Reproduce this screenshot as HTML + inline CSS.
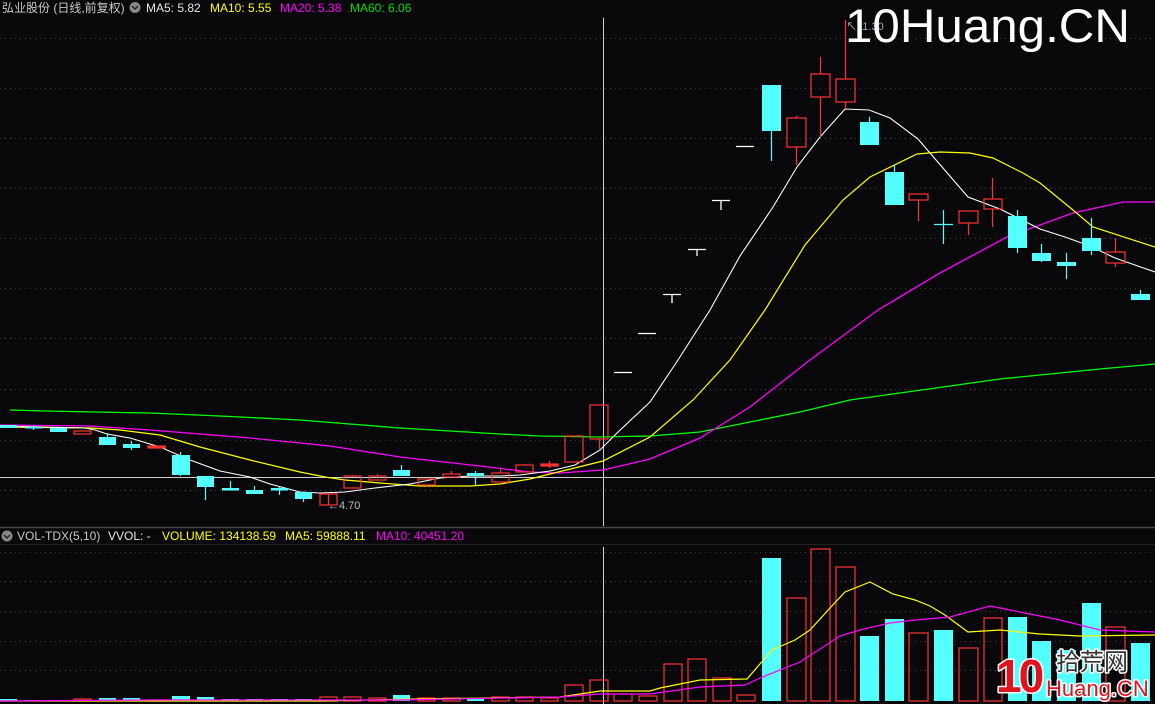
<!DOCTYPE html>
<html><head><meta charset="utf-8"><style>
html,body{margin:0;padding:0;background:#08080b;width:1155px;height:704px;overflow:hidden}
svg{display:block}
text{font-family:"Liberation Sans","Noto Sans CJK SC",sans-serif}
</style></head><body>
<svg width="1155" height="704" viewBox="0 0 1155 704" xmlns="http://www.w3.org/2000/svg">
<rect width="1155" height="704" fill="#08080b"/>
<g stroke="#3a3a3a" stroke-dasharray="1,4" stroke-width="1">
<line x1="0" y1="38.5" x2="1155" y2="38.5"/><line x1="0" y1="88.5" x2="1155" y2="88.5"/><line x1="0" y1="138.5" x2="1155" y2="138.5"/><line x1="0" y1="188.5" x2="1155" y2="188.5"/><line x1="0" y1="238.5" x2="1155" y2="238.5"/><line x1="0" y1="288.5" x2="1155" y2="288.5"/><line x1="0" y1="338.5" x2="1155" y2="338.5"/><line x1="0" y1="389.5" x2="1155" y2="389.5"/><line x1="0" y1="440.5" x2="1155" y2="440.5"/><line x1="0" y1="490.5" x2="1155" y2="490.5"/>
<line x1="0" y1="552.5" x2="1155" y2="552.5"/><line x1="0" y1="581.5" x2="1155" y2="581.5"/><line x1="0" y1="611.5" x2="1155" y2="611.5"/><line x1="0" y1="641.5" x2="1155" y2="641.5"/><line x1="0" y1="670.5" x2="1155" y2="670.5"/>
</g>
<line x1="0" y1="527.5" x2="1155" y2="527.5" stroke="#444" stroke-width="1.5"/>
<line x1="0" y1="544.5" x2="1155" y2="544.5" stroke="#222"/>
<line x1="603.5" y1="18" x2="603.5" y2="526" stroke="#cfcfcf"/>
<line x1="603.5" y1="547" x2="603.5" y2="704" stroke="#cfcfcf"/>
<line x1="0" y1="477.5" x2="1155" y2="477.5" stroke="#cfcfcf"/>

<polyline fill="none" stroke="#00ff00" stroke-width="1.3" points="10,410 45,411 95,412 150,413 220,416 300,420 350,424 400,428 450,431 500,434 540,436 600,437 650,436 700,432 750,422 800,412 850,400 900,393 950,386 1000,379 1050,374 1100,369 1155,364"/>
<polyline fill="none" stroke="#ff00ff" stroke-width="1.3" points="0,425 90,426 150,430 250,438 330,446 400,457 480,466 530,472 560,473 603,470 650,459 700,438 750,407 810,360 878,310 940,273 1007,237 1073,213 1123,202 1155,202"/>
<polyline fill="none" stroke="#ffff00" stroke-width="1.2" points="0,427 90,428 120,430 160,435 200,447 250,460 300,472 325,477 345,480 380,483 420,486 470,486 500,484 530,479 550,474 603,461 650,437 693,400 730,360 765,310 805,245 843,200 870,177 917,154 940,152 970,153 993,158 1023,173 1040,183 1073,210 1093,227 1155,247"/>
<polyline fill="none" stroke="#ffffff" stroke-width="1.1" points="0,426 85,428 95,430 107,434 130,438 160,447 190,460 220,471 250,477 270,484 300,492 320,493 345,492 375,488 410,484 440,478 470,476 500,476 520,475 550,471 575,465 600,450 617,433 650,402 678,360 710,310 740,256 773,207 797,167 820,137 845,109 869,110 890,118 918,139 930,153 968,197 1000,209 1040,229 1065,237 1090,246 1115,258 1155,272"/>

<g stroke="#ff3232" fill="none" stroke-width="1.2">
<rect x="74" y="431" width="17" height="3"/>
<rect x="148" y="446" width="17" height="2" fill="#ff3232"/>
<line x1="328.5" y1="494" x2="328.5" y2="505"/><rect x="320" y="494" width="17" height="11"/>
<line x1="352.5" y1="475" x2="352.5" y2="476"/><rect x="344" y="476" width="17" height="12"/>
<line x1="377.5" y1="474" x2="377.5" y2="476"/><rect x="369" y="476" width="17" height="4"/>
<line x1="426.5" y1="485" x2="426.5" y2="487"/><rect x="418" y="479" width="17" height="6"/>
<line x1="451.5" y1="471" x2="451.5" y2="474"/><rect x="443" y="474" width="17" height="3"/>
<line x1="500.5" y1="468" x2="500.5" y2="473"/><rect x="492" y="473" width="17" height="9"/>
<line x1="524.5" y1="464" x2="524.5" y2="465"/><rect x="516" y="465" width="17" height="7"/>
<line x1="549.5" y1="461" x2="549.5" y2="468"/><rect x="541" y="464" width="17" height="2" fill="#ff3232"/>
<rect x="565" y="436" width="18" height="26"/>
<line x1="599.5" y1="439" x2="599.5" y2="449"/><rect x="590" y="405" width="18" height="34"/>
<line x1="796.5" y1="116" x2="796.5" y2="118"/><line x1="796.5" y1="147" x2="796.5" y2="165"/><rect x="787" y="118" width="19" height="29"/>
<line x1="820.5" y1="57" x2="820.5" y2="74"/><line x1="820.5" y1="97" x2="820.5" y2="137"/><rect x="811" y="74" width="19" height="23"/>
<line x1="845.5" y1="20" x2="845.5" y2="79"/><line x1="845.5" y1="102" x2="845.5" y2="109"/><rect x="836" y="79" width="19" height="23"/>
<line x1="918.5" y1="200" x2="918.5" y2="221"/><rect x="909" y="194" width="19" height="6"/>
<line x1="968.5" y1="223" x2="968.5" y2="235"/><rect x="959" y="211" width="19" height="12"/>
<line x1="992.5" y1="178" x2="992.5" y2="199"/><line x1="992.5" y1="209" x2="992.5" y2="227"/><rect x="984" y="199" width="18" height="10"/>
<line x1="1115.5" y1="238" x2="1115.5" y2="252"/><line x1="1115.5" y1="263" x2="1115.5" y2="267"/><rect x="1106" y="252" width="19" height="11"/>
</g>
<g stroke="#ffffff" stroke-width="1.3">
<line x1="614" y1="372.5" x2="632" y2="372.5"/>
<line x1="638" y1="333.5" x2="656" y2="333.5"/>
<line x1="663" y1="294.5" x2="681" y2="294.5"/><line x1="672" y1="294" x2="672" y2="303"/>
<line x1="688" y1="249.5" x2="706" y2="249.5"/><line x1="697" y1="249" x2="697" y2="256"/>
<line x1="712" y1="200.5" x2="730" y2="200.5"/><line x1="721" y1="200" x2="721" y2="210"/>
<line x1="736" y1="146.5" x2="754" y2="146.5"/>
</g>
<g fill="#54ffff" stroke="#54ffff" stroke-width="1.2">
<rect x="0" y="425" width="17" height="3" stroke="none"/>
<line x1="33.5" y1="426" x2="33.5" y2="430"/><rect x="25" y="427" width="17" height="1.5" stroke="none"/>
<rect x="50" y="428" width="17" height="4" stroke="none"/>
<line x1="107.5" y1="433" x2="107.5" y2="437"/><rect x="99" y="437" width="17" height="8" stroke="none"/>
<line x1="131.5" y1="441" x2="131.5" y2="450"/><rect x="123" y="444" width="17" height="4" stroke="none"/>
<line x1="180.5" y1="452" x2="180.5" y2="476"/><rect x="172" y="455" width="18" height="20" stroke="none"/>
<line x1="205.5" y1="476" x2="205.5" y2="500"/><rect x="197" y="476" width="17" height="11" stroke="none"/>
<line x1="230.5" y1="481" x2="230.5" y2="488"/><rect x="222" y="488" width="17" height="2.5" stroke="none"/>
<line x1="254.5" y1="486" x2="254.5" y2="490"/><rect x="246" y="490" width="17" height="4" stroke="none"/>
<line x1="279.5" y1="486" x2="279.5" y2="495"/><rect x="271" y="488" width="17" height="2.5" stroke="none"/>
<line x1="303.5" y1="492" x2="303.5" y2="502"/><rect x="295" y="492" width="17" height="7" stroke="none"/>
<line x1="401.5" y1="465" x2="401.5" y2="470"/><rect x="393" y="470" width="17" height="6" stroke="none"/>
<line x1="475.5" y1="471" x2="475.5" y2="485"/><rect x="467" y="473" width="17" height="3" stroke="none"/>
<line x1="771.5" y1="131" x2="771.5" y2="161"/><rect x="762" y="85" width="19" height="46" stroke="none"/>
<line x1="869.5" y1="117" x2="869.5" y2="122"/><rect x="860" y="122" width="19" height="23" stroke="none"/>
<line x1="894.5" y1="165" x2="894.5" y2="172"/><rect x="885" y="172" width="19" height="33" stroke="none"/>
<line x1="943.5" y1="210" x2="943.5" y2="244"/><line x1="934" y1="224.5" x2="953" y2="224.5"/>
<line x1="1017.5" y1="210" x2="1017.5" y2="253"/><rect x="1008" y="216" width="19" height="32" stroke="none"/>
<line x1="1041.5" y1="244" x2="1041.5" y2="262"/><rect x="1032" y="253" width="19" height="8" stroke="none"/>
<line x1="1066.5" y1="253" x2="1066.5" y2="279"/><rect x="1057" y="262" width="19" height="4" stroke="none"/>
<line x1="1091.5" y1="218" x2="1091.5" y2="255"/><rect x="1082" y="238" width="19" height="13" stroke="none"/>
<line x1="1140.5" y1="290" x2="1140.5" y2="294"/><rect x="1131" y="294" width="19" height="6" stroke="none"/>
</g>
<text x="846" y="30" font-size="11" fill="#9ab">↖11.30</text>
<text x="328" y="509" font-size="11" fill="#bbb">←4.70</text>

<g fill="#54ffff">
<rect x="0" y="699" width="17" height="2"/><rect x="25" y="700" width="17" height="1"/><rect x="50" y="700" width="17" height="1"/><rect x="99" y="698" width="17" height="3"/><rect x="123" y="698" width="17" height="3"/><rect x="172" y="696" width="18" height="5"/><rect x="197" y="697" width="17" height="4"/><rect x="222" y="699" width="17" height="2"/><rect x="246" y="699" width="17" height="2"/><rect x="271" y="699" width="17" height="2"/><rect x="295" y="699" width="17" height="2"/><rect x="393" y="695" width="17" height="6"/><rect x="467" y="698" width="17" height="3"/>
<rect x="762" y="558" width="19" height="143"/><rect x="860" y="636" width="19" height="65"/><rect x="885" y="619" width="19" height="82"/><rect x="934" y="630" width="19" height="71"/><rect x="1008" y="617" width="19" height="84"/><rect x="1032" y="641" width="19" height="60"/><rect x="1057" y="650" width="19" height="51"/><rect x="1082" y="603" width="19" height="98"/><rect x="1131" y="643" width="19" height="58"/>
</g>
<g fill="none" stroke="#ff3232" stroke-width="1.2">
<rect x="74" y="699" width="17" height="2"/><rect x="148" y="700" width="17" height="1"/><rect x="320" y="697" width="17" height="4"/><rect x="344" y="697" width="17" height="4"/><rect x="369" y="698" width="17" height="3"/><rect x="418" y="698" width="17" height="3"/><rect x="443" y="698" width="17" height="3"/><rect x="492" y="697" width="17" height="4"/><rect x="516" y="697" width="17" height="4"/><rect x="541" y="698" width="17" height="3"/><rect x="565" y="685" width="18" height="16"/>
<rect x="590" y="680" width="18" height="21"/><rect x="614" y="694" width="18" height="7"/><rect x="639" y="696" width="18" height="5"/><rect x="664" y="664" width="18" height="37"/><rect x="688" y="659" width="18" height="42"/><rect x="713" y="678" width="18" height="23"/><rect x="737" y="695" width="18" height="6"/>
<rect x="787" y="598" width="19" height="103"/><rect x="811" y="549" width="19" height="152"/><rect x="836" y="567" width="19" height="134"/><rect x="909" y="633" width="19" height="68"/><rect x="959" y="648" width="19" height="53"/><rect x="984" y="618" width="18" height="83"/><rect x="1106" y="627" width="19" height="74"/>
</g>
<polyline fill="none" stroke="#ffff00" stroke-width="1.2" points="0,701 300,701 320,701 420,699 560,697 600,691 650,691 660,688 700,680 747,679 772,650 795,640 810,630 830,608 845,592 870,582 893,594 915,600 930,606 945,615 968,632 1000,630 1040,634 1080,636 1155,635"/>
<polyline fill="none" stroke="#ff00ff" stroke-width="1.2" points="0,701 150,700 400,700 560,697 600,694 650,694 700,687 745,685 760,678 800,662 840,636 860,630 890,623 915,620 950,617 990,606 1020,612 1060,620 1100,630 1155,632"/>

<rect x="0" y="0" width="1155" height="17" fill="#08080b"/>
<text x="2" y="12" font-size="12" fill="#c8c8c8">弘业股份 (日线,前复权)</text>
<circle cx="135" cy="7.5" r="5.5" fill="#888"/><path d="M132 6 L135 9 L138 6" stroke="#222" stroke-width="1.4" fill="none"/>
<text x="146" y="12" font-size="12" fill="#e6e6e6">MA5: 5.82</text>
<text x="210" y="12" font-size="12" fill="#ffff00">MA10: 5.55</text>
<text x="280" y="12" font-size="12" fill="#ff00ff">MA20: 5.38</text>
<text x="350" y="12" font-size="12" fill="#00dd00">MA60: 6.06</text>
<circle cx="7" cy="536" r="5.5" fill="#888"/><path d="M4 535 L7 538 L10 535" stroke="#222" stroke-width="1.4" fill="none"/>
<text x="17" y="540" font-size="12" fill="#c8c8c8">VOL-TDX(5,10)</text>
<text x="108" y="540" font-size="12" fill="#e6e6e6">VVOL: -</text>
<text x="162" y="540" font-size="12" fill="#ffff00">VOLUME: 134138.59</text>
<text x="285" y="540" font-size="12" fill="#ffff00">MA5: 59888.11</text>
<text x="376" y="540" font-size="12" fill="#ff00ff">MA10: 40451.20</text>

<text x="845" y="42" font-size="47" fill="#ffffff" textLength="285" lengthAdjust="spacingAndGlyphs">10Huang.CN</text>
<g stroke="#ffffff" stroke-width="3" paint-order="stroke" stroke-linejoin="round">
<text x="996" y="692" font-size="46" font-weight="bold" fill="#e0141e" letter-spacing="-3">10</text>
<text x="1056" y="670" font-size="24" fill="#333" font-family="Noto Sans CJK SC, sans-serif">拾荒网</text>
<text x="1046" y="696" font-size="22" fill="#e0141e">Huang.CN</text>
</g>
</svg>
</body></html>
